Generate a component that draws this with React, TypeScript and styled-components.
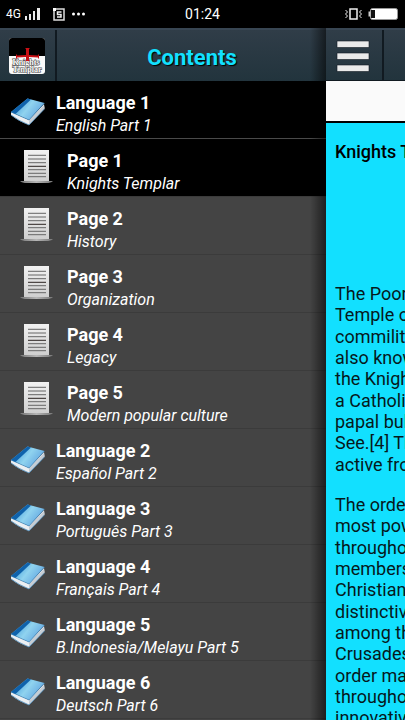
import React from "react";
import styled, { createGlobalStyle, css } from "styled-components";

const GlobalStyle = createGlobalStyle`
  * { box-sizing: border-box; }
  html, body, #root { height: 100%; }
  body {
    margin: 0;
    background: #000;
    font-family: Roboto, "Noto Sans", sans-serif;
  }
`;

const Screen = styled.div`
  display: flex;
  flex-direction: column;
  height: 100vh;
  overflow: hidden;
`;

const StatusBar = styled.div`
  display: grid;
  grid-template-columns: 1fr auto 1fr;
  align-items: center;
  flex: none;
  height: 28px;
  padding: 0 6px;
  background: #000;
  color: #fff;
  font-size: 14px;
`;

const StatusGroup = styled.div<{ $end?: boolean }>`
  display: flex;
  align-items: center;
  justify-content: ${(p) => (p.$end ? "flex-end" : "flex-start")};
  gap: ${(p) => (p.$end ? "4px" : "0")};
`;

const Network = styled.span`
  font-size: 12px;
`;

const Body = styled.div`
  display: flex;
  flex: 1;
  min-height: 0;
`;

const Drawer = styled.nav`
  position: relative;
  display: flex;
  flex-direction: column;
  flex: 1;
  min-width: 0;
  overflow: hidden;
  background: #444;

  &::after {
    content: "";
    position: absolute;
    inset: 0 0 0 auto;
    width: 16px;
    background: linear-gradient(to right, rgba(0, 0, 0, 0), rgba(0, 0, 0, 0.55));
    pointer-events: none;
  }
`;

const barSurface = css`
  display: flex;
  align-items: center;
  flex: none;
  height: 53px;
  border-top: 2px solid #384653;
  background: linear-gradient(#303d48, #22343d);
`;

const DrawerHeader = styled.header`
  ${barSurface}
`;

const LogoCell = styled.div`
  display: flex;
  align-items: center;
  align-self: stretch;
  width: 57px;
  padding-left: 9px;
  border-right: 2px solid #111a21;
`;

const Heading = styled.h1`
  flex: 1;
  margin: 0;
  padding: 4px 0 0 1px;
  color: #12e0ff;
  font-size: 22px;
  line-height: 28px;
  font-weight: 700;
  text-align: center;
  text-shadow: 1px 1px 1px #000;
`;

const List = styled.ul`
  margin: 0;
  padding: 0;
  list-style: none;
`;

const Entry = styled.button<{ $nested?: boolean; $active?: boolean }>`
  display: flex;
  align-items: flex-start;
  gap: 8px;
  width: 100%;
  padding: 10px 8px 1px ${(p) => (p.$nested ? "19px" : "8px")};
  border: 0;
  border-bottom: 1px solid ${(p) => (p.$active && !p.$nested ? "#4a4a4a" : "#3b3b3b")};
  background: ${(p) => (p.$active ? "#000" : "#444")};
  color: #fff;
  font-family: inherit;
  text-align: left;
`;

const Label = styled.span`
  display: flex;
  flex-direction: column;
  min-width: 0;
`;

const Title = styled.strong`
  font-size: 18px;
  line-height: 24px;
  font-weight: 700;
`;

const Subtitle = styled.em`
  font-size: 16px;
  line-height: 22px;
  white-space: nowrap;
`;

const Page = styled.main`
  display: flex;
  flex-direction: column;
  flex: none;
  width: 79px;
  overflow: hidden;
  background: #12e0ff;
`;

const PageBar = styled.header`
  ${barSurface}
  border-bottom: 1px solid #111a21;
`;

const MenuButton = styled.button`
  display: flex;
  align-items: center;
  align-self: stretch;
  flex: none;
  width: 58px;
  padding: 2px 0 0 10px;
  border: 0;
  border-right: 2px solid #111a21;
  background: none;
`;

const Banner = styled.div`
  flex: none;
  height: 42px;
  border-bottom: 2px solid #000;
  background: #fafafa;
`;

const Article = styled.article`
  flex: 1;
  min-height: 0;
  padding: 18px 0 0 9px;
  overflow: hidden;
  color: #06191c;
  font-size: 18px;
  line-height: 1.185;
  white-space: nowrap;
`;

const ArticleTitle = styled.h2`
  margin: 0 0 121px;
  color: #000;
  font-size: 18px;
  line-height: 21px;
  font-weight: 500;
`;

const Paragraph = styled.p`
  margin: 0 0 19px;
`;

const Line = styled.span`
  display: block;
`;

const SignalIcon = () => (
  <svg width="48" height="16" viewBox="0 0 48 16" fill="#fff" aria-hidden="true">
    <path d="M4 10h2v4H4zM8 8h2v6H8zM12 5h2v9h-2zM16 2h3v12h-3z" fillOpacity=".92" />
    <path d="M33 3h10v11H33z" fill="none" stroke="#ddd" strokeWidth="1.5" />
    <path d="M32 2h3v3h-3z" />
    <path d="M40.500 6h-4v2.500h3.500V11H36" fill="none" stroke="#eee" strokeWidth="1.500" />
  </svg>
);

const DotsIcon = () => (
  <svg width="20" height="16" viewBox="0 0 20 16" fill="#fff" aria-hidden="true">
    <circle cx="4.500" cy="8" r="1.500" />
    <circle cx="9.500" cy="8" r="1.500" />
    <circle cx="14.500" cy="8" r="1.500" />
  </svg>
);

const VibrateIcon = () => (
  <svg width="20" height="16" viewBox="0 0 20 16" fill="none" stroke="#eee" aria-hidden="true">
    <path d="M7 3h7v10H7z" strokeWidth="1.500" />
    <path d="m2.500 4 2 2-2 2 2 2-2 2M18.500 4l-2 2 2 2-2 2 2 2" />
  </svg>
);

const BatteryIcon = () => (
  <svg width="32" height="16" viewBox="0 0 32 16" aria-hidden="true">
    <rect x="3.500" y="2.500" width="27" height="11" rx="2" fill="#fff" stroke="#999" />
    <path d="M4 4h4v8H4z" fill="#111" />
    <path d="M2.500 5.500v5" stroke="#ccc" strokeWidth="2" />
  </svg>
);

const LogoIcon = () => (
  <svg width="36" height="36" viewBox="0 0 36 36" aria-hidden="true">
    <defs>
      <clipPath id="logo-shape"><rect width="36" height="36" rx="3" /></clipPath>
    </defs>
    <g clipPath="url(#logo-shape)">
      <path d="M0 0h36v36H0z" fill="#fafafa" />
      <path d="M0 0h36v18H0z" fill="#000" />
      <g
        fill="#fff" stroke="#444" strokeWidth="1" paintOrder="stroke"
        fontFamily="Liberation Serif, serif" fontWeight="700" textAnchor="middle"
      >
        <text x="17" y="27" fontSize="8">Knights</text>
        <text x="18" y="34" fontSize="8">Templar</text>
      </g>
      <path
        d="M16 10h5l-1 1v6l9 .5v-1h1v4h-1v-1l-9-.5v3l1 1h-5l1-1v-3l-9 .5v1H7v-4h1v1l9-.5v-6z"
        fill="#c90f14"
      />
    </g>
  </svg>
);

const BookIcon = () => (
  <svg width="40" height="38" viewBox="0 0 40 38" aria-hidden="true">
    <defs>
      <linearGradient id="book-cover" x1="0" y1=".2" x2="1" y2=".7">
        <stop offset=".1" stopColor="#459fdc" />
        <stop offset=".5" stopColor="#90d3ef" />
        <stop offset="1" stopColor="#5b9fde" />
      </linearGradient>
    </defs>
    <path d="m3 21 18 8L36 13l.5 4.500L21 34Q10 30 3 24z" fill="#eceff2" />
    <path d="m21 29 15-15 .5 3.500L21 34z" fill="#c6cdd4" />
    <path d="M19.500 7.500 36.500 12 21 29 3 21z" fill="url(#book-cover)" />
    <path d="m19.500 7.500 3.500 1L7.500 23 3 21z" fill="#0f62ab" />
    <path d="M3 24q7 5.500 18 10l15.500-16" fill="none" stroke="#4b8cbb" strokeWidth=".8" />
    <path d="m3 21 18 8 15.500-17" fill="none" stroke="#2d7dba" strokeWidth=".5" />
  </svg>
);

const PageIcon = () => (
  <svg width="40" height="38" viewBox="0 0 40 38" aria-hidden="true">
    <defs>
      <linearGradient id="sheet" x1="0" y1="0" x2="0" y2="1">
        <stop offset="0" stopColor="#f2f2f2" />
        <stop offset="1" stopColor="#cfcfcf" />
      </linearGradient>
      <linearGradient id="sheet-base" x1="0" y1="0" x2="1" y2="0">
        <stop offset="0" stopColor="#777" />
        <stop offset=".5" stopColor="#b5b5b5" />
        <stop offset="1" stopColor="#777" />
      </linearGradient>
    </defs>
    <path d="M1 32h33q-2 2-7 2H8q-5 0-7-2z" fill="url(#sheet-base)" />
    <path d="M5 1h25v31H5z" fill="url(#sheet)" />
    <path
      d="M9 6.300h18M9 10h18M9 13.700h18M9 20.700h18M9 24.300h18M9 27.700h18"
      stroke="#666"
    />
    <path d="M9 17.300h18" stroke="#2a2220" />
  </svg>
);

const MenuIcon = () => (
  <svg width="34" height="34" viewBox="0 0 34 34" aria-hidden="true">
    <g fill="#eaeaea" stroke="#111a21" strokeWidth=".6">
      <path d="M1 2h32v6.500H1zM1 14h32v6.500H1zM1 26h32v6.500H1z" />
    </g>
  </svg>
);

type Item = { title: string; subtitle: string; nested?: boolean; active?: boolean };

const items: Item[] = [
  { title: "Language 1", subtitle: "English Part 1", active: true },
  { title: "Page 1", subtitle: "Knights Templar", nested: true, active: true },
  { title: "Page 2", subtitle: "History", nested: true },
  { title: "Page 3", subtitle: "Organization", nested: true },
  { title: "Page 4", subtitle: "Legacy", nested: true },
  { title: "Page 5", subtitle: "Modern popular culture", nested: true },
  { title: "Language 2", subtitle: "Español Part 2" },
  { title: "Language 3", subtitle: "Português Part 3" },
  { title: "Language 4", subtitle: "Français Part 4" },
  { title: "Language 5", subtitle: "B.Indonesia/Melayu Part 5" },
  { title: "Language 6", subtitle: "Deutsch Part 6" },
];

const paragraphs: string[][] = [
  ["The Poor", "Temple of", "commilitones", "also known", "the Knights", "a Catholic", "papal bull", "See.[4] The", "active from"],
  ["The order", "most powerful", "throughout", "members", "Christian", "distinctive", "among the", "Crusades", "order managed", "throughout", "innovative"],
];

export default function App() {
  return (
    <>
      <GlobalStyle />
      <Screen>
        <StatusBar>
          <StatusGroup>
            <Network>4G</Network>
            <SignalIcon />
            <DotsIcon />
          </StatusGroup>
          <time>01:24</time>
          <StatusGroup $end>
            <VibrateIcon />
            <BatteryIcon />
          </StatusGroup>
        </StatusBar>
        <Body>
          <Drawer aria-label="Contents">
            <DrawerHeader>
              <LogoCell><LogoIcon /></LogoCell>
              <Heading>Contents</Heading>
            </DrawerHeader>
            <List>
              {items.map((item) => (
                <li key={item.title}>
                  <Entry type="button" $nested={item.nested} $active={item.active}>
                    {item.nested ? <PageIcon /> : <BookIcon />}
                    <Label>
                      <Title>{item.title}</Title>
                      <Subtitle>{item.subtitle}</Subtitle>
                    </Label>
                  </Entry>
                </li>
              ))}
            </List>
          </Drawer>
          <Page>
            <PageBar>
              <MenuButton type="button" aria-label="Menu"><MenuIcon /></MenuButton>
            </PageBar>
            <Banner />
            <Article>
              <ArticleTitle>Knights Templar</ArticleTitle>
              {paragraphs.map((lines, i) => (
                <Paragraph key={i}>
                  {lines.map((line, n) => <Line key={n}>{line}</Line>)}
                </Paragraph>
              ))}
            </Article>
          </Page>
        </Body>
      </Screen>
    </>
  );
}
